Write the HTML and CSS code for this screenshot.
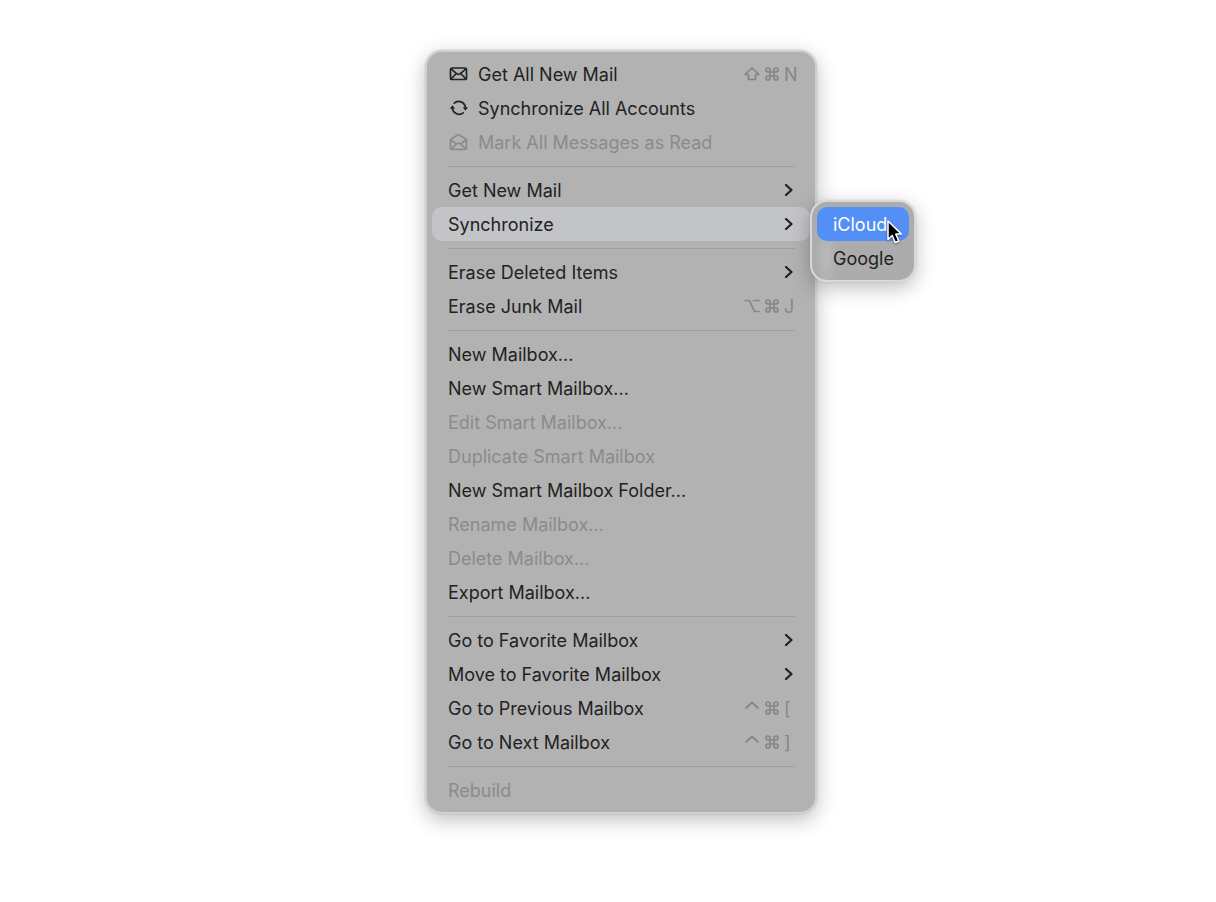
FILE: index.html
```html
<!DOCTYPE html>
<html lang="en">
<head>
    <meta charset="UTF-8">
    <title>Mailbox Menu</title>
    <link rel="stylesheet" href="styles.css">
</head>
<body>
    <svg class="symbols" aria-hidden="true">
        <symbol id="chevron" viewBox="0 0 10 14">
            <path d="M2 2l5.500 5L2 12"/>
        </symbol>
        <symbol id="command" viewBox="0 0 14 14">
            <path d="M5 5H3a2 2 0 1 1 2-2v8a2 2 0 1 1-2-2h8a2 2 0 1 1-2 2V3a2 2 0 1 1 2 2H5"/>
        </symbol>
        <symbol id="shift" viewBox="0 0 16 14">
            <path d="M8 1L1 7.500H4.500v5h7v-5H15z"/>
        </symbol>
        <symbol id="option" viewBox="0 0 16 14">
            <path d="M1 1.500h4.500l5 11H15M9.500 1.500H15"/>
        </symbol>
        <symbol id="control" viewBox="0 0 16 14">
            <path d="M2 7l6-5.500L14 7"/>
        </symbol>
    </svg>

    <nav class="stage">
        <ul class="menu">
            <li>
                <button class="item" type="button">
                    <svg class="icon" viewBox="0 0 20 18">
                        <rect x="2.500" y="3" width="16" height="11.500" rx="1.800"/>
                        <path d="M3 3.800l6 5q1.500 1.200 3 0l6-5M3 14l5.300-5.500M18 14l-5.300-5.500"/>
                    </svg>
                    <span class="label">Get All New Mail</span>
                    <span class="shortcut"><svg class="mod"><use href="#shift"/></svg><svg class="cmd"><use href="#command"/></svg><kbd>N</kbd></span>
                </button>
            </li>
            <li>
                <button class="item" type="button">
                    <svg class="icon" viewBox="0 0 20 18">
                        <path d="M6.200 4.200a6.700 6.700 0 0 1 11.200 4.300M15.200 13.800A6.700 6.700 0 0 1 4.400 9.500"/>
                        <path class="solid" d="M14.800 8.200H20l-2.600 3.500zM1.800 9.800H7L4.400 6.300z"/>
                    </svg>
                    <span class="label">Synchronize All Accounts</span>
                </button>
            </li>
            <li>
                <button class="item" type="button" disabled>
                    <svg class="icon" viewBox="0 0 20 18">
                        <path d="M2.500 7.200q0-.8.700-1.200l6.300-4q1-.6 2 0l6.300 4q.7.400.7 1.200v7.300q0 1.800-1.800 1.800H4.300q-1.800 0-1.800-1.800zM3 7l5.500 4M18 7l-5.500 4M3.200 15.700l5.800-5q1.500-1.200 3 0l5.800 5"/>
                    </svg>
                    <span class="label">Mark All Messages as Read</span>
                </button>
            </li>
            <li class="separator" role="separator"></li>
            <li>
                <button class="item" type="button" aria-haspopup="true">
                    <span class="label">Get New Mail</span>
                    <svg class="chevron"><use href="#chevron"/></svg>
                </button>
            </li>
            <li class="parent">
                <button class="item open" type="button" aria-haspopup="true" aria-expanded="true">
                    <span class="label">Synchronize</span>
                    <svg class="chevron"><use href="#chevron"/></svg>
                </button>
                <ul class="menu submenu">
                    <li>
                        <button class="item selected" type="button">iCloud</button>
                        <svg class="cursor" viewBox="0 0 18 26">
                            <path d="M2 2v18.500l4.200-4 3 7 3.600-1.500-3-6.900h5.700z"/>
                        </svg>
                    </li>
                    <li><button class="item" type="button">Google</button></li>
                </ul>
            </li>
            <li class="separator" role="separator"></li>
            <li>
                <button class="item" type="button" aria-haspopup="true">
                    <span class="label">Erase Deleted Items</span>
                    <svg class="chevron"><use href="#chevron"/></svg>
                </button>
            </li>
            <li>
                <button class="item" type="button">
                    <span class="label">Erase Junk Mail</span>
                    <span class="shortcut"><svg class="mod"><use href="#option"/></svg><svg class="cmd"><use href="#command"/></svg><kbd>J</kbd></span>
                </button>
            </li>
            <li class="separator" role="separator"></li>
            <li><button class="item" type="button">New Mailbox...</button></li>
            <li><button class="item" type="button">New Smart Mailbox...</button></li>
            <li><button class="item" type="button" disabled>Edit Smart Mailbox...</button></li>
            <li><button class="item" type="button" disabled>Duplicate Smart Mailbox</button></li>
            <li><button class="item" type="button">New Smart Mailbox Folder...</button></li>
            <li><button class="item" type="button" disabled>Rename Mailbox...</button></li>
            <li><button class="item" type="button" disabled>Delete Mailbox...</button></li>
            <li><button class="item" type="button">Export Mailbox...</button></li>
            <li class="separator" role="separator"></li>
            <li>
                <button class="item" type="button" aria-haspopup="true">
                    <span class="label">Go to Favorite Mailbox</span>
                    <svg class="chevron"><use href="#chevron"/></svg>
                </button>
            </li>
            <li>
                <button class="item" type="button" aria-haspopup="true">
                    <span class="label">Move to Favorite Mailbox</span>
                    <svg class="chevron"><use href="#chevron"/></svg>
                </button>
            </li>
            <li>
                <button class="item" type="button">
                    <span class="label">Go to Previous Mailbox</span>
                    <span class="shortcut"><svg class="mod"><use href="#control"/></svg><svg class="cmd"><use href="#command"/></svg><kbd>[</kbd></span>
                </button>
            </li>
            <li>
                <button class="item" type="button">
                    <span class="label">Go to Next Mailbox</span>
                    <span class="shortcut"><svg class="mod"><use href="#control"/></svg><svg class="cmd"><use href="#command"/></svg><kbd>]</kbd></span>
                </button>
            </li>
            <li class="separator" role="separator"></li>
            <li><button class="item" type="button" disabled>Rebuild</button></li>
        </ul>
    </nav>
</body>
</html>
```
FILE: styles.css
```css
* {
    margin: 0;
    padding: 0;
    box-sizing: border-box;
}

body {
    background: white;
    font-family: Inter, "Liberation Sans", sans-serif;
    font-size: 18px;
    color: #222;
}

.symbols {
    display: none;
}

.stage {
    display: flex;
    justify-content: center;
    padding: 50px 0 50px 26px;
}

.menu {
    width: 100%;
    max-width: 392px;
    padding: 5px;
    list-style: none;
    background: #b2b2b2;
    border: 2px solid #d0d0d0;
    border-radius: 17px;
    box-shadow: 0 0 2px rgba(0,0,0,0.15), 0 6px 20px rgba(0,0,0,0.25);
}

.parent {
    position: relative;
}

.submenu {
    position: absolute;
    top: -7px;
    left: 378px;
    width: 106px;
    background: radial-gradient(ellipse 12px 36px at 14px 54px, #bababa, #acacac);
    border-color: #d8d8d8;
}

.item {
    display: flex;
    align-items: center;
    width: 100%;
    height: 34px;
    padding: 0 16px;
    font: inherit;
    color: inherit;
    text-align: left;
    white-space: nowrap;
    background: none;
    border: none;
    border-radius: 10px;
}

.item:disabled {
    color: #8b8b8b;
}

.item.open {
    background: #c3c4c8;
}

.item.selected {
    color: white;
    background: #548ff5;
}

.label {
    flex: 1;
}

svg {
    flex: none;
    fill: none;
    stroke: currentColor;
    stroke-width: 1.7;
    stroke-linecap: round;
    stroke-linejoin: round;
}

.icon {
    width: 20px;
    height: 18px;
    margin-right: 10px;
}

.solid {
    fill: currentColor;
    stroke: none;
}

.chevron {
    width: 10px;
    height: 14px;
    stroke-width: 2.3;
}

.shortcut {
    display: grid;
    grid-template-columns: 16px 14px 10px;
    gap: 5px;
    align-items: center;
    color: #868686;
}

.mod {
    width: 16px;
    height: 14px;
}

.cmd {
    width: 14px;
    height: 14px;
}

kbd {
    font: inherit;
}

.separator {
    height: 1px;
    margin: 7px 15px 6px;
    background: #a0a0a0;
}

.cursor {
    position: absolute;
    top: 17px;
    left: 74px;
    width: 18px;
    height: 26px;
    fill: black;
    stroke: white;
    stroke-width: 1.5;
    filter: drop-shadow(0 1px 1px rgba(0,0,0,0.4));
}
```
